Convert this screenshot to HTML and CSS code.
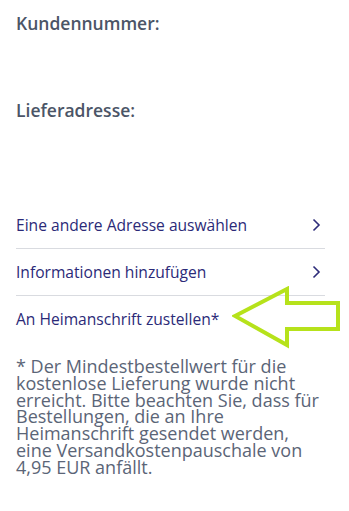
FILE: index.html
```html
<!DOCTYPE html>
<html>
<head>
    <meta name="viewport" content="width=device-width, initial-scale=1">
    <title>Lieferung</title>
<link rel="stylesheet" href="styles.css">
</head>
<body>
<div class="page">
  <div class="field">Kundennummer:</div>
  <div class="field field-second">Lieferadresse:</div>

  <ul class="options">
    <li class="option">
      <span>Eine andere Adresse auswählen</span>
      <svg class="chev" width="9" height="14" viewBox="0 0 9 14"><path d="M1.5 1.5 L7 7 L1.5 12.5" fill="none" stroke="#2d2c7a" stroke-width="1.6"/></svg>
    </li>
    <li class="option">
      <span>Informationen hinzufügen</span>
      <svg class="chev" width="9" height="14" viewBox="0 0 9 14"><path d="M1.5 1.5 L7 7 L1.5 12.5" fill="none" stroke="#2d2c7a" stroke-width="1.6"/></svg>
    </li>
    <li class="option option-last">
      <span>An Heimanschrift zustellen*</span>
      <!-- marker arrow drawn on top of the row -->
      <svg class="arrow" width="110" height="64" viewBox="0 0 110 64">
        <path d="M3 30 L55 3 L55 17 L106 17 L106 43 L55 43 L55 59 Z" fill="none" stroke="#b6e21b" stroke-width="4" stroke-linejoin="miter"/>
      </svg>
    </li>
  </ul>

  <p class="note">* Der Mindestbestellwert für die kostenlose Lieferung wurde nicht erreicht. Bitte beachten Sie, dass für Bestellungen, die an Ihre Heimanschrift gesendet werden, eine Versandkostenpauschale von 4,95 EUR anfällt.</p>
</div>
</body>
</html>
```
FILE: styles.css
```css
body {
    margin: 0;
    background: #ffffff;
    font-family: "Open Sans", sans-serif;
}

.page {
    padding: 11px 24px 0 16px;
}

.field {
    font-size: 17.5px;
    font-weight: 600;
    color: #4b5567;
    line-height: 24px;
}

.field-second {
    margin-top: 63px;
}

.options {
    list-style: none;
    margin: 80px 0 0 0;
    padding: 0;
}

.option {
    position: relative;
    display: flex;
    justify-content: space-between;
    align-items: center;
    height: 46px;
    border-bottom: 1px solid #d9dbe0;
    font-size: 15.6px;
    font-weight: 500;
    color: #2b2a78;
}

.option-last {
    border-bottom: none;
}

.chev {
    margin-right: 4px;
}

.arrow {
    position: absolute;
    left: 216px;
    top: -10px;
}

.note {
    margin: 16px 0 0 0;
    font-size: 18px;
    line-height: 16.8px;
    color: #5b6577;
}
```
